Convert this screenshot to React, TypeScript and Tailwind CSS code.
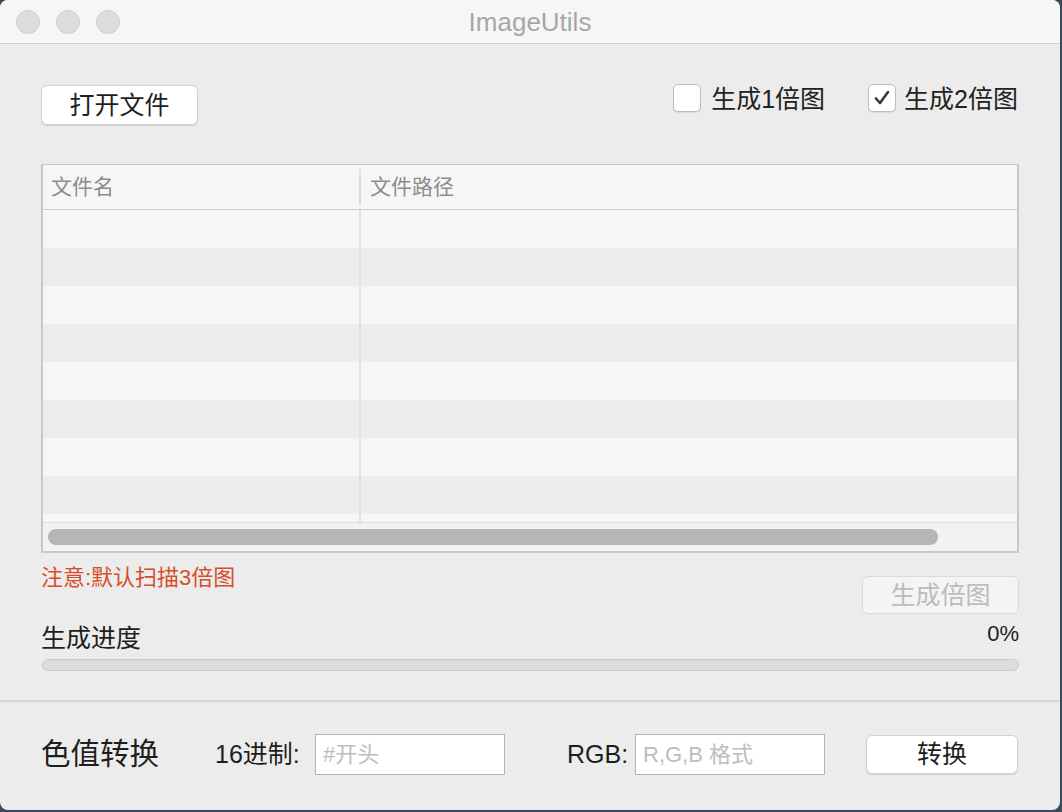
import React from "react";

const font = { fontFamily: '"Liberation Sans", "Noto Sans CJK SC", sans-serif' };

function Check({ checked }: { checked: boolean }) {
  return (
    <div className="w-[28px] h-[28px] shrink-0 rounded-[5px] border border-[#bdbdbd] bg-white flex items-center justify-center shadow-[0_1px_1px_rgba(0,0,0,0.08)]">
      {checked && (
        <svg width="20" height="20" viewBox="0 0 20 20">
          <path d="M4 10.5 L8 15 L16 4" fill="none" stroke="#3a3a3a" strokeWidth="2.6" strokeLinecap="round" strokeLinejoin="round" />
        </svg>
      )}
    </div>
  );
}

export default function App() {
  const rows = Array.from({ length: 8 });
  return (
    <div className="w-[1062px] h-[812px] bg-[#3b4a5a] overflow-hidden" style={font}>
      <div className="w-[1060px] h-[810px] bg-[#ececec] rounded-[8px] overflow-hidden flex flex-col">
        {/* Title bar */}
        <div className="h-[44px] bg-[#f6f6f6] border-b border-[#d0d0d0] flex items-center relative shrink-0">
          <div className="flex gap-[16px] pl-[16px]">
            <div className="w-[24px] h-[24px] rounded-full bg-[#dcdcdc] border border-[#cdcdcd]" />
            <div className="w-[24px] h-[24px] rounded-full bg-[#dcdcdc] border border-[#cdcdcd]" />
            <div className="w-[24px] h-[24px] rounded-full bg-[#dcdcdc] border border-[#cdcdcd]" />
          </div>
          <div className="absolute inset-0 pt-[2px] flex items-center justify-center text-[26px] text-[#a7a7a7] pointer-events-none">
            ImageUtils
          </div>
        </div>

        {/* Main */}
        <div className="px-[41px] flex flex-col">
          <div className="flex items-start justify-between pt-[41px]">
            <button className="w-[157px] h-[40px] bg-white rounded-[6px] border border-[#d2d2d2] shadow-[0_1px_1px_rgba(0,0,0,0.12)] text-[25px] text-[#1e1e1e] flex items-center justify-center leading-none">
              打开文件
            </button>
            <div className="flex items-center mr-[1px] mt-[-1px]">
              <div className="flex items-center gap-[10px]">
                <Check checked={false} />
                <span className="text-[25px] text-[#222] leading-none mt-[3px] whitespace-nowrap">生成1倍图</span>
              </div>
              <div className="flex items-center gap-[8px] ml-[43px]">
                <Check checked={true} />
                <span className="text-[25px] text-[#222] leading-none mt-[3px] whitespace-nowrap">生成2倍图</span>
              </div>
            </div>
          </div>

          {/* Table */}
          <div className="mt-[39px] h-[389px] border-2 border-t border-[#c8c8c8] bg-[#f6f6f6] flex flex-col overflow-hidden">
            <div className="h-[45px] shrink-0 flex border-b border-[#cdcdcd] bg-[#f6f6f6]">
              <div className="w-[318px] flex items-center pl-[8px] text-[21px] text-[#8c8c8c] border-r-2 border-[#dcdcdc] my-[4px]">
                文件名
              </div>
              <div className="flex-1 flex items-center pl-[9px] text-[21px] text-[#8c8c8c]">文件路径</div>
            </div>
            <div className="flex-1 relative overflow-hidden">
              {rows.map((_, i) => (
                <div key={i} className={`h-[38px] flex ${i % 2 === 0 ? "bg-[#f6f6f6]" : "bg-[#ececec]"}`}>
                  <div className="w-[318px] border-r-2 border-[#e2e2e2]" />
                </div>
              ))}
              <div className="h-[38px] flex bg-[#f6f6f6]">
                <div className="w-[318px] border-r-2 border-[#e2e2e2]" />
              </div>
            </div>
            <div className="h-[29px] shrink-0 border-t border-[#dedede] bg-[#f2f2f2] flex items-center pl-[5px]">
              <div className="w-[890px] h-[16px] rounded-full bg-[#b6b6b6]" />
            </div>
          </div>

          {/* Notice + button */}
          <div className="flex justify-between items-start">
            <div className="mt-[12px] text-[22px] text-[#d54e2a] leading-[26px]">注意:默认扫描3倍图</div>
            <button className="mt-[23px] w-[157px] h-[38px] rounded-[6px] bg-[#f4f4f4] border border-[#dadada] text-[25px] text-[#bcbcbc] flex items-center justify-center leading-none">
              生成倍图
            </button>
          </div>

          <div className="flex justify-between items-end mt-[7px]">
            <div className="text-[25px] text-[#1e1e1e] leading-[30px]">生成进度</div>
            <div className="text-[22px] text-[#1e1e1e] leading-[26px] mb-[6px]">0%</div>
          </div>

          <div className="mt-[6px] ml-[1px] h-[12px] rounded-full bg-[#dcdcdc] border border-[#cbcbcb]" />
        </div>

        {/* Separator */}
        <div className="mt-[29px] h-[2px] bg-[#d6d6d6]" />

        {/* Bottom */}
        <div className="flex-1 flex items-center px-[41px] pb-[4px] whitespace-nowrap">
          <div className="shrink-0 w-[119px] text-[29.5px] text-[#1e1e1e] leading-none">色值转换</div>
          <div className="shrink-0 w-[88px] ml-[55px] text-[25px] text-[#1e1e1e] leading-none">16进制:</div>
          <div className="shrink-0 ml-[12px] w-[190px] h-[41px] bg-white border border-[#b3b3b3] flex items-center pl-[7px] text-[22px] text-[#bdbdbd]">
            #开头
          </div>
          <div className="shrink-0 w-[60px] ml-[62px] text-[25px] text-[#1e1e1e] leading-none">RGB:</div>
          <div className="shrink-0 ml-[8px] w-[190px] h-[41px] bg-white border border-[#b3b3b3] flex items-center pl-[7px] text-[22px] text-[#bdbdbd]">
            R,G,B 格式
          </div>
          <button className="shrink-0 ml-[41px] w-[152px] h-[39px] bg-white rounded-[6px] border border-[#d2d2d2] shadow-[0_1px_1px_rgba(0,0,0,0.12)] text-[25px] text-[#1e1e1e] flex items-center justify-center leading-none">
            转换
          </button>
        </div>
      </div>
    </div>
  );
}
